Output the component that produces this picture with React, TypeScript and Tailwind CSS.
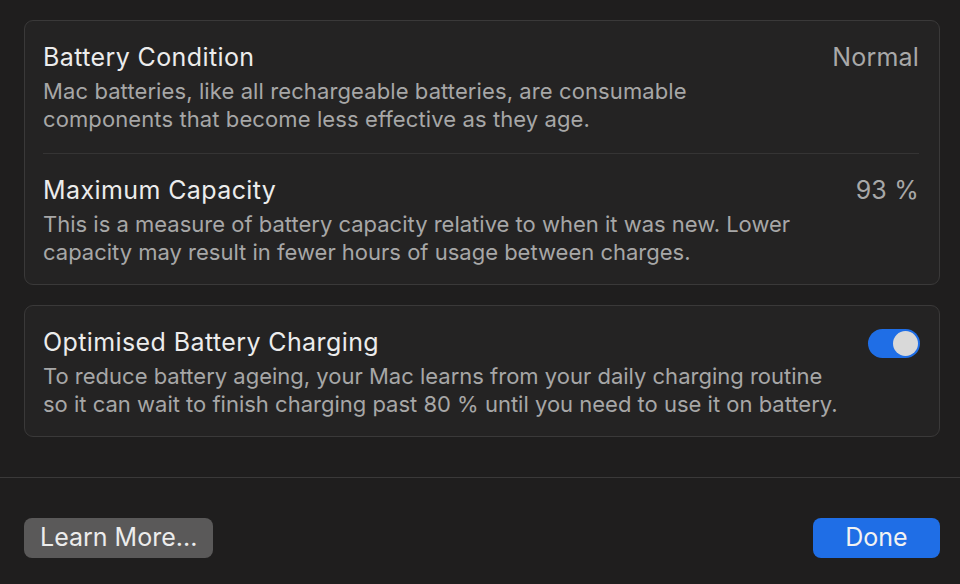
import React from "react";

export default function App() {
  return (
    <div
      className="w-[960px] h-[584px] bg-[#1f1e1e] flex flex-col overflow-hidden"
      style={{ fontFamily: "Inter, 'Noto Sans', sans-serif" }}
    >
      <div className="flex flex-col gap-5 pl-6 pr-5 pt-5">
        <div className="rounded-[9px] border border-[#3a3939] bg-[#242323] pl-[18px] pr-5">
          <div className="pt-[22px] pb-[20px] border-b border-[#353434]">
            <div className="flex justify-between items-center h-[30px]">
              <span className="text-[25px] tracking-[0.4px] text-[#ececec]">Battery Condition</span>
              <span className="text-[25px] tracking-[0.2px] text-[#a8a8a8]">Normal</span>
            </div>
            <p className="mt-1 text-[22px] leading-[28px] tracking-[0.1px] text-[#a7a7a7]">
              Mac batteries, like all rechargeable batteries, are consumable
              <br />
              components that become less effective as they age.
            </p>
          </div>
          <div className="pt-[22px] pb-[18px]">
            <div className="flex justify-between items-center h-[30px]">
              <span className="text-[25px] tracking-[0.4px] text-[#ececec]">Maximum Capacity</span>
              <span className="text-[25px] tracking-[0.2px] text-[#a8a8a8]">93 %</span>
            </div>
            <p className="mt-1 text-[22px] leading-[28px] text-[#a7a7a7]">
              This is a measure of battery capacity relative to when it was new. Lower
              <br />
              capacity may result in fewer hours of usage between charges.
            </p>
          </div>
        </div>

        <div className="rounded-[9px] border border-[#3a3939] bg-[#242323] pl-[18px] pr-[19px] pt-[22px] pb-[18px]">
          <div className="flex justify-between items-center h-[30px]">
            <span className="text-[25px] tracking-[0.4px] text-[#ececec]">Optimised Battery Charging</span>
            <div className="w-[52px] h-[29px] rounded-full bg-[#1f6ee6] flex items-center justify-end pr-[2px]">
              <div className="w-[25px] h-[25px] rounded-full bg-[#d9d9d9]" />
            </div>
          </div>
          <p className="mt-1 text-[22px] leading-[28px] text-[#a7a7a7]">
            To reduce battery ageing, your Mac learns from your daily charging routine
            <br />
            so it can wait to finish charging past 80 % until you need to use it on battery.
          </p>
        </div>
      </div>

      <div className="mt-[40px] h-px bg-[#3a3939]" />

      <div className="flex justify-between pl-6 pr-5 pt-[40px]">
        <button className="h-[40px] w-[189px] rounded-[8px] bg-[#5a5959] text-[25px] text-[#ececec] text-left pl-4">
          Learn More...
        </button>
        <button className="h-[40px] w-[127px] rounded-[8px] bg-[#1f6ee6] text-[25px] text-[#f2f2f2]">
          Done
        </button>
      </div>
    </div>
  );
}
